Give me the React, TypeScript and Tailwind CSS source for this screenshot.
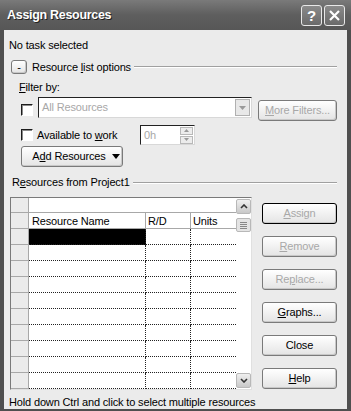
import React from "react";

const font = { fontFamily: '"Liberation Sans", Arial, sans-serif' };

function Btn({
  children,
  disabled,
  className = "",
  focused,
}: {
  children: React.ReactNode;
  disabled?: boolean;
  className?: string;
  focused?: boolean;
}) {
  return (
    <div
      className={`flex items-center justify-center rounded-[3px] border ${
        focused ? "border-black" : "border-[#7a7a7a]"
      } bg-gradient-to-b from-white to-[#e4e4e4] shadow-[inset_-1px_-1px_0_#c8c8c8] ${
        disabled ? "text-[#a8a8a8]" : "text-black"
      } ${className}`}
    >
      {children}
    </div>
  );
}

function Check() {
  return <div className="h-[12px] w-[12px] shrink-0 border border-[#1c1c1c] border-r-white border-b-white bg-white shadow-[inset_1px_1px_0_#8a8a8a]" />;
}

function Etched({ label }: { label: React.ReactNode }) {
  return (
    <div className="flex items-center">
      <span className="whitespace-nowrap">{label}</span>
      <div className="ml-[3px] flex-1 border-t border-[#a0a0a0] border-b border-b-white" />
    </div>
  );
}

const rows = Array.from({ length: 10 });

export default function App() {
  return (
    <div style={font} className="flex h-[411px] w-[351px] flex-col bg-[#4f4f4f] text-[11px] leading-[13px] tracking-[-0.15px] text-black">
      {/* title bar */}
      <div className="flex h-[30px] shrink-0 items-center bg-gradient-to-b from-[#7a7a7a] via-[#5e5e5e] to-[#575757] pl-[7px] pr-[6px]">
        <span className="text-[12.5px] font-bold tracking-[-0.3px] text-white [text-shadow:1px_1px_0_#222]">Assign Resources</span>
        <div className="ml-auto flex gap-[2px]">
          <div className="flex h-[21px] w-[21px] items-center justify-center rounded-[3px] border border-[#e8e8e8] bg-gradient-to-b from-[#8a8a8a] to-[#6a6a6a] text-[15px] font-bold text-white">
            ?
          </div>
          <div className="flex h-[21px] w-[21px] items-center justify-center rounded-[3px] border border-[#e8e8e8] bg-gradient-to-b from-[#8a8a8a] to-[#6a6a6a]">
            <svg width="13" height="13" viewBox="0 0 13 13">
              <path d="M2 2 L11 11 M11 2 L2 11" stroke="white" strokeWidth="2.2" />
            </svg>
          </div>
        </div>
      </div>

      {/* body */}
      <div className="mx-[4px] mb-[4px] flex flex-1 flex-col bg-[#ebebeb] pr-[10px]">
        <div className="ml-[5px] mt-[9px] h-[13px]">No task selected</div>

        <div className="ml-[7px] mt-[8px] flex h-[14px] items-center">
          <Btn className="h-[14px] w-[16px] text-[11px]">-</Btn>
          <div className="ml-[5px] flex-1">
            <Etched label={<>Resource <u>l</u>ist options</>} />
          </div>
        </div>

        <div className="ml-[15px] mt-[7px] h-[13px]">
          <u>F</u>ilter by:
        </div>

        <div className="ml-[17px] mt-[3px] flex h-[24px] items-start">
          <div className="mt-[7px]">
            <Check />
          </div>
          <div className="ml-[5px] flex h-[21px] w-[214px] items-center border border-[#222] border-r-[#d8d8d8] border-b-[#d8d8d8] bg-white pl-[3px] pr-[1px] text-[#a8a8a8]">
            <span className="flex-1">All Resources</span>
            <div className="flex h-[17px] w-[15px] items-center justify-center border border-[#b0b0b0] bg-[#e8e8e8]">
              <svg width="7" height="4" viewBox="0 0 7 4">
                <path d="M0 0 H7 L3.5 4 Z" fill="#9a9a9a" />
              </svg>
            </div>
          </div>
          <Btn disabled className="ml-[6px] mt-[3px] h-[21px] w-[79px]">
            <span>
              <u>M</u>ore Filters...
            </span>
          </Btn>
        </div>

        <div className="ml-[17px] mt-[4px] flex h-[20px] items-center">
          <Check />
          <span className="ml-[4px] w-[103px]">
            Available to <u>w</u>ork
          </span>
          <div className="flex h-[20px] w-[55px] items-center border border-[#222] border-r-[#d8d8d8] border-b-[#d8d8d8] bg-white pl-[3px] pr-[1px] text-[#a8a8a8]">
            <span className="flex-1">0h</span>
            <div className="flex flex-col gap-px">
              <div className="flex h-[8px] w-[13px] items-center justify-center border border-[#b8b8b8] bg-[#ececec]">
                <svg width="5" height="3" viewBox="0 0 5 3"><path d="M0 3 H5 L2.5 0 Z" fill="#999" /></svg>
              </div>
              <div className="flex h-[8px] w-[13px] items-center justify-center border border-[#b8b8b8] bg-[#ececec]">
                <svg width="5" height="3" viewBox="0 0 5 3"><path d="M0 0 H5 L2.5 3 Z" fill="#999" /></svg>
              </div>
            </div>
          </div>
        </div>

        <div className="ml-[17px] mt-[1px]">
          <Btn className="h-[21px] w-[102px] gap-[6px] pl-[8px]">
            <span>
              A<u>d</u>d Resources
            </span>
            <svg width="8" height="5" viewBox="0 0 8 5">
              <path d="M0 0 H8 L4 5 Z" fill="#000" />
            </svg>
          </Btn>
        </div>

        <div className="ml-[8px] mt-[9px] h-[13px]">
          <Etched label={<>R<u>e</u>sources from Project1</>} />
        </div>

        <div className="ml-[6px] mt-[8px] flex items-start">
          {/* grid */}
          <div className="flex w-[242px] border border-[#7a7a7a] border-r-[#e0e0e0] border-b-[#e0e0e0] bg-white">
            <div className="flex w-[225px] flex-col">
              <div className="flex h-[15px]">
                <div className="w-[18px] border-r border-b border-[#a8a8a8] bg-[#ebebeb]" />
                <div className="flex-1 border-b border-[#a8a8a8]" />
              </div>
              <div className="flex h-[16px]">
                <div className="w-[18px] border-r border-b border-[#a8a8a8] bg-[#ebebeb]" />
                <div className="w-[117px] border-r border-b border-[#a8a8a8] pl-[3px] pt-[2px]">Resource Name</div>
                <div className="w-[45px] border-r border-b border-[#a8a8a8] pl-[2px] pt-[2px]">R/D</div>
                <div className="w-[45px] border-b border-[#a8a8a8] pl-[2px] pt-[2px]">Units</div>
              </div>
              {rows.map((_, i) => (
                <div key={i} className="flex h-[16px]">
                  <div className="w-[18px] border-r border-b border-[#a8a8a8] bg-[#ebebeb]" />
                  <div
                    className={`w-[117px] border-r border-b border-dotted border-[#222] ${
                      i === 0 ? "bg-black" : ""
                    }`}
                  />
                  <div className="w-[45px] border-r border-b border-dotted border-[#222]" />
                  <div className="w-[45px] border-b border-dotted border-[#222]" />
                </div>
              ))}
            </div>
            {/* scrollbar */}
            <div className="flex w-[16px] flex-col items-center bg-white py-[1px]">
              <div className="flex h-[15px] w-[15px] items-center justify-center rounded-[2px] border border-[#b8b8b8] bg-gradient-to-b from-[#f0f0f0] to-[#c8c8c8]">
                <svg width="8" height="5" viewBox="0 0 8 5"><path d="M1 4 L4 1 L7 4" stroke="#333" strokeWidth="1.6" fill="none" /></svg>
              </div>
              <div className="mt-[4px] flex h-[14px] w-[15px] flex-col items-center justify-center gap-px rounded-[2px] border border-[#b8b8b8] bg-[#e4e4e4]">
                <div className="h-px w-[7px] bg-[#888]" />
                <div className="h-px w-[7px] bg-[#888]" />
                <div className="h-px w-[7px] bg-[#888]" />
                <div className="h-px w-[7px] bg-[#888]" />
              </div>
              <div className="flex-1" />
              <div className="flex h-[15px] w-[15px] items-center justify-center rounded-[2px] border border-[#b8b8b8] bg-gradient-to-b from-[#f0f0f0] to-[#c8c8c8]">
                <svg width="8" height="5" viewBox="0 0 8 5"><path d="M1 1 L4 4 L7 1" stroke="#333" strokeWidth="1.6" fill="none" /></svg>
              </div>
            </div>
          </div>

          {/* buttons */}
          <div className="ml-[10px] mt-[6px] flex flex-col gap-[12px]">
            <Btn disabled focused className="h-[21px] w-[75px]">
              <span><u>A</u>ssign</span>
            </Btn>
            <Btn disabled className="h-[21px] w-[75px]">
              <span><u>R</u>emove</span>
            </Btn>
            <Btn disabled className="h-[21px] w-[75px]">
              <span>Re<u>p</u>lace...</span>
            </Btn>
            <Btn className="h-[21px] w-[75px]">
              <span><u>G</u>raphs...</span>
            </Btn>
            <Btn className="h-[21px] w-[75px]">
              <span>Close</span>
            </Btn>
            <Btn className="h-[21px] w-[75px]">
              <span><u>H</u>elp</span>
            </Btn>
          </div>
        </div>

        <div className="ml-[5px] mt-[6px] h-[13px] whitespace-nowrap">
          Hold down Ctrl and click to select multiple resources
        </div>
      </div>
    </div>
  );
}
